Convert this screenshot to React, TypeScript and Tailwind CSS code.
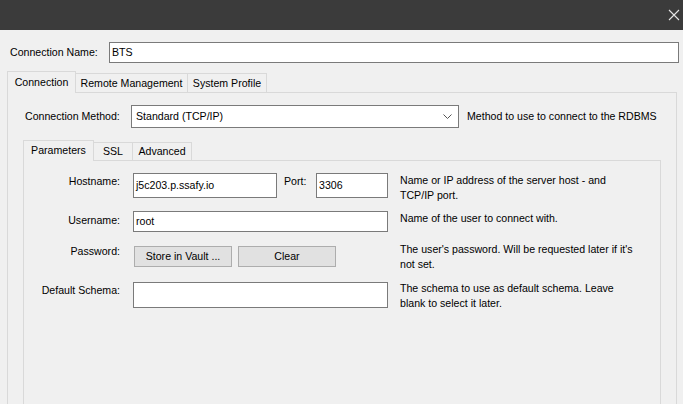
import React from 'react'

// MySQL Workbench 스타일 연결 설정 대화상자
function Field({ w, h, value }: { w: string; h: string; value?: string }) {
  return (
    <div className={`${w} ${h} bg-white border border-[#7a7a7a] flex items-center pl-[2px]`}>
      {value}
    </div>
  )
}

export default function App() {
  return (
    <div className="w-[683px] h-[404px] overflow-hidden bg-[#f0f0f0] text-black text-[10.6px] leading-[15px] font-['Liberation_Sans',Arial,sans-serif]">
      {/* title bar */}
      <div className="h-[30px] bg-[#3b3b3b] flex items-center justify-end pr-[3px]">
        <svg width="12" height="12" viewBox="0 0 12 12" className="text-[#e6e6e6]">
          <path d="M1 1L11 11M11 1L1 11" stroke="currentColor" strokeWidth="1.1" />
        </svg>
      </div>

      {/* connection name */}
      <div className="mt-[12px] h-[21px] flex items-center">
        <div className="w-[109px] pl-[10px]">Connection Name:</div>
        <Field w="w-[570px]" h="h-[21px]" value="BTS" />
      </div>

      {/* outer tabs */}
      <div className="mt-[8px] h-[21px] flex items-end pl-[7px]">
        <div className="relative z-10 -mb-px h-[22px] w-[69px] border-x border-t border-[#d9d9d9] bg-[#f0f0f0] flex items-center justify-center pb-[1px]">
          Connection
        </div>
        <div className="h-[19px] w-[112px] border-t border-r border-[#d9d9d9] flex items-center justify-center whitespace-nowrap">
          Remote Management
        </div>
        <div className="h-[19px] w-[79px] border-t border-r border-[#d9d9d9] flex items-center justify-center whitespace-nowrap">
          System Profile
        </div>
      </div>

      {/* outer panel */}
      <div className="ml-[7px] w-[670px] h-[320px] border border-[#d9d9d9] pt-[12px]">
        <div className="h-[23px] flex items-center">
          <div className="w-[123px] pl-[17px]">Connection Method:</div>
          <div className="w-[328px] h-[23px] bg-white border border-[#7a7a7a] flex items-center justify-between pl-[4px] pr-[6px]">
            <span>Standard (TCP/IP)</span>
            <svg width="9" height="5" viewBox="0 0 9 5" className="text-[#555]">
              <path d="M0.5 0.5L4.5 4.5L8.5 0.5" stroke="currentColor" fill="none" strokeWidth="1" />
            </svg>
          </div>
          <div className="ml-[8px]">Method to use to connect to the RDBMS</div>
        </div>

        {/* inner tabs */}
        <div className="mt-[12px] ml-[15px] h-[20px] flex items-end">
          <div className="relative z-10 -mb-px h-[21px] w-[71px] border-x border-t border-[#d9d9d9] bg-[#f0f0f0] flex items-center justify-center pb-[1px]">
            Parameters
          </div>
          <div className="h-[18px] w-[39px] border-t border-r border-[#d9d9d9] flex items-center justify-center">
            SSL
          </div>
          <div className="h-[18px] w-[59px] border-t border-r border-[#d9d9d9] flex items-center justify-center">
            Advanced
          </div>
        </div>

        {/* inner panel */}
        <div className="ml-[15px] w-[638px] h-[260px] border border-[#d9d9d9] pt-[12px]">
          <div className="h-[38px] flex items-start">
            <div className="w-[96px] text-right pt-[1px]">Hostname:</div>
            <div className="ml-[13px]">
              <Field w="w-[144px]" h="h-[25px]" value="j5c203.p.ssafy.io" />
            </div>
            <div className="ml-[7px] w-[32px] pt-[1px]">Port:</div>
            <Field w="w-[72px]" h="h-[25px]" value="3306" />
            <div className="ml-[12px] whitespace-nowrap">
              Name or IP address of the server host - and
              <br />
              TCP/IP port.
            </div>
          </div>

          <div className="h-[35px] flex items-start">
            <div className="w-[96px] text-right pt-[2px]">Username:</div>
            <div className="ml-[13px]">
              <Field w="w-[255px]" h="h-[21px]" value="root" />
            </div>
            <div className="ml-[12px]">Name of the user to connect with.</div>
          </div>

          <div className="h-[36px] flex items-start">
            <div className="w-[96px] text-right -mt-[2px]">Password:</div>
            <div className="ml-[13px] w-[255px] flex gap-[6px] pl-[1px]">
              <div className="w-[98px] h-[21px] bg-[#e1e1e1] border border-[#adadad] flex items-center justify-center">
                Store in Vault ...
              </div>
              <div className="w-[98px] h-[21px] bg-[#e1e1e1] border border-[#adadad] flex items-center justify-center">
                Clear
              </div>
            </div>
            <div className="ml-[12px] -mt-[4px] whitespace-nowrap">
              The user's password. Will be requested later if it's
              <br />
              not set.
            </div>
          </div>

          <div className="flex items-start">
            <div className="w-[96px] text-right pt-[1px]">Default Schema:</div>
            <div className="ml-[13px]">
              <Field w="w-[255px]" h="h-[26px]" />
            </div>
            <div className="ml-[12px] -mt-[1px] whitespace-nowrap">
              The schema to use as default schema. Leave
              <br />
              blank to select it later.
            </div>
          </div>
        </div>
      </div>
    </div>
  )
}
